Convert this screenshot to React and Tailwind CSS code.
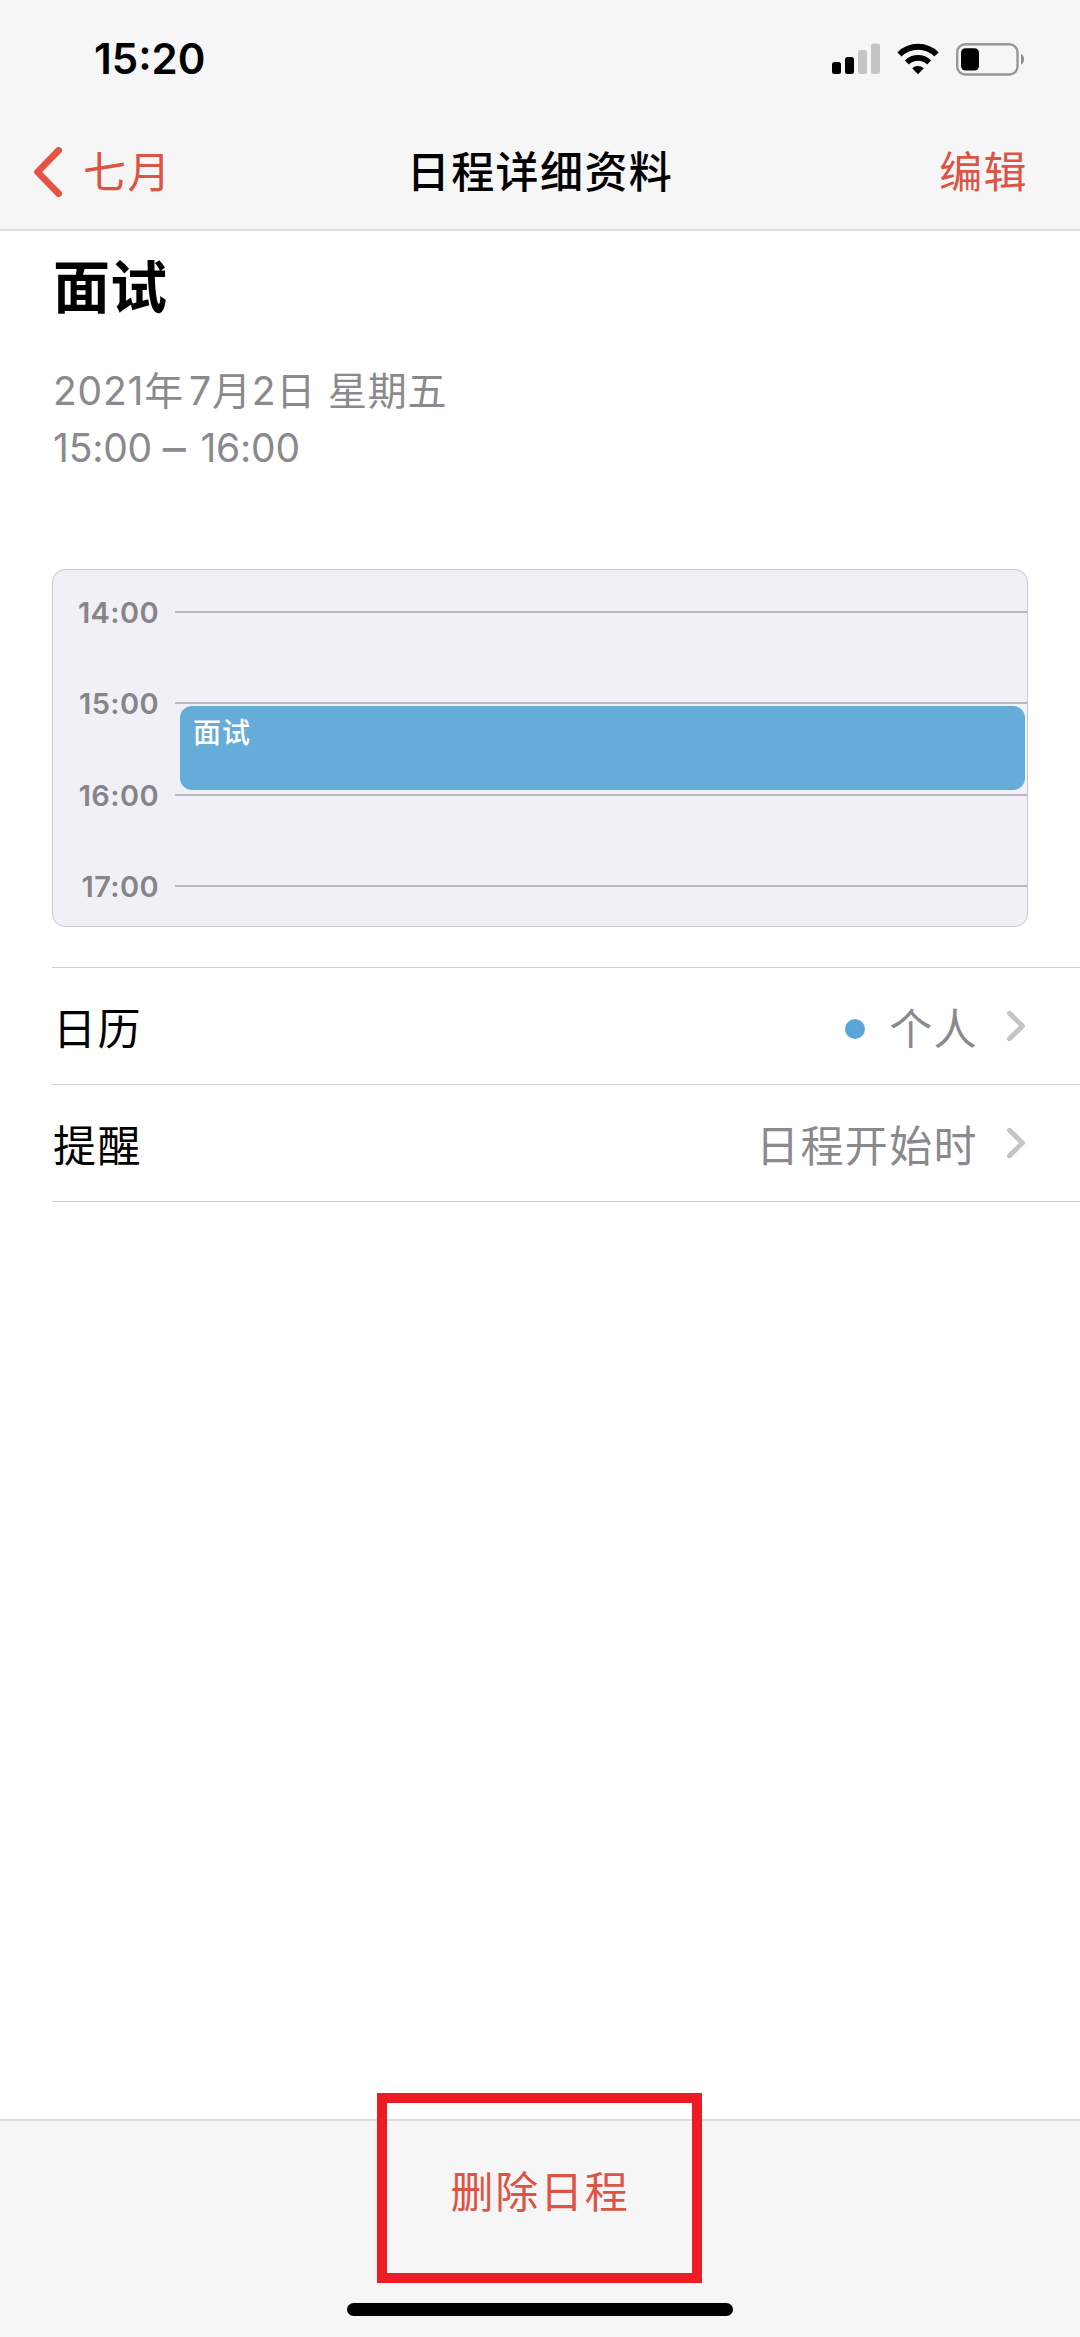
import React from 'react';

const HOURS = ['14:00', '15:00', '16:00', '17:00'];

const ROWS = [
  { label: '日历', value: '个人', dot: true },
  { label: '提醒', value: '日程开始时', dot: false },
];

const SignalIcon = () => (
  <svg width="48" height="32" viewBox="0 0 48 32">
    <rect x="0" y="19" width="9" height="12" rx="2.5" fill="#000" />
    <rect x="13" y="14" width="9" height="17" rx="2.5" fill="#000" />
    <rect x="26" y="7" width="9" height="24" rx="2.5" fill="#c5c5c6" />
    <rect x="39" y="0.5" width="9" height="30.5" rx="2.5" fill="#c5c5c6" />
  </svg>
);

const WifiIcon = () => (
  <svg width="42" height="32" viewBox="0 0 42 32" fill="none" stroke="#000">
    <path d="M2.5 11.5 A26.2 26.2 0 0 1 39.5 11.5" strokeWidth="6" />
    <path d="M9.9 19.4 A15.8 15.8 0 0 1 32.1 19.4" strokeWidth="5.6" />
    <path d="M21 31.2 L15.2 25.3 A8.4 8.4 0 0 1 26.8 25.3 Z" fill="#000" stroke="none" />
  </svg>
);

const BatteryIcon = () => (
  <svg width="69" height="33" viewBox="0 0 69 33">
    <rect x="1.2" y="1.2" width="60.3" height="30.3" rx="8" fill="none" stroke="#98989a" strokeWidth="2.4" />
    <rect x="5" y="5.2" width="18" height="22.3" rx="4.5" fill="#000" />
    <path d="M65 10.8 C69 12.5 69 20 65 21.8 Z" fill="#8e8e90" />
  </svg>
);

const Disclosure = () => (
  <svg width="20" height="32" viewBox="0 0 20 32" fill="none" stroke="#c4c4c7" strokeWidth="5" strokeLinecap="round" strokeLinejoin="round">
    <path d="M3.5 3.3 L16.5 16 L3.5 28.7" />
  </svg>
);

const Header = () => (
  <header className="h-[231px] bg-[#f6f6f6] border-b-2 border-[#dcdcdd]">
    <div className="h-[118px] pl-[94px] pr-[55px] flex items-center justify-between">
      <span className="text-[42px] leading-none font-semibold">15:20</span>
      <div className="flex items-center">
        <SignalIcon />
        <span className="w-[17px]" />
        <WifiIcon />
        <span className="w-[17px]" />
        <BatteryIcon />
      </div>
    </div>
    <nav className="h-[108px] px-[34px] grid grid-cols-3 items-center text-[43px] leading-none tracking-[1.4px]">
      <button className="flex items-center gap-[21px] text-[#dc5445]">
        <svg width="28" height="50" viewBox="0 0 28 50" fill="none" stroke="#e65444" strokeWidth="6.8" strokeLinecap="round" strokeLinejoin="round">
          <path d="M24.6 3.4 L3.6 25 L24.6 46.6" />
        </svg>
        七月
      </button>
      <h1 className="font-medium text-center whitespace-nowrap">日程详细资料</h1>
      <button className="pr-[18px] text-right text-[#dc5445]">编辑</button>
    </nav>
  </header>
);

const Timeline = () => (
  <div className="relative h-[358px] ml-[52px] mr-[52px] mt-[93px] rounded-[13px] border border-[#c9c8cd] bg-[#f1f0f6] overflow-hidden">
    <div className="pt-[19px]">
      {HOURS.map((h) => (
        <div key={h} className="h-[91.3px] flex items-start">
          <span className="w-[106px] pt-[9px] text-right text-[29px] leading-none font-semibold tracking-[0.4px] text-[#86858a]">{h}</span>
          <span className="flex-1 ml-[16px] mt-[22px] h-[2px] bg-[#b9b8be]" />
        </div>
      ))}
    </div>
    {/* event block over the hour grid */}
    <div className="absolute left-[127px] right-[2px] top-[136px] h-[84px] rounded-[12px] bg-[#66acd9] ring-2 ring-[#eef3fb] pl-[13px] pt-[13px] text-[28px] leading-none font-medium tracking-[1px] text-white">
      面试
    </div>
  </div>
);

export default function App() {
  return (
    <div className="relative w-[1080px] h-[2337px] bg-white text-black overflow-hidden flex flex-col font-[Inter,'Noto_Sans_CJK_SC',sans-serif]">
      <Header />

      <main className="flex-1">
        <h2 className="pl-[53px] pt-[27px] text-[57px] leading-[60px] font-bold">面试</h2>
        <div className="pl-[53px] pt-[44px] text-[39px] leading-[57px] text-[#8a8a8e]">
          <p className="h-[57px] tracking-[0.8px]">2021年<span className="ml-[5px]">7</span>月2日 星期五</p>
          <p className="h-[57px] tracking-[-0.2px]">
            15:00 <span className="relative top-[2px] mr-[4px] text-[46px] leading-none">–</span> 16:00
          </p>
        </div>

        <Timeline />

        <div className="ml-[52px] mt-[40px] border-t border-[#d0d0d2]">
          {ROWS.map((row) => (
            <div key={row.label} className="h-[117px] pl-[1px] pr-[54px] flex items-center border-b border-[#d0d0d2] text-[43px] leading-none tracking-[1.4px]">
              <span className="pt-[6px]">{row.label}</span>
              <span className="flex-1" />
              {row.dot && <span className="w-5 h-5 mr-[24px] mt-[6px] rounded-full bg-[#5ba6d6]" />}
              <span className="mr-[28px] pt-[6px] text-[#8a8a8e]">{row.value}</span>
              <Disclosure />
            </div>
          ))}
        </div>
      </main>

      <footer className="h-[218px] bg-[#f6f6f6] border-t-2 border-[#dcdcdd] flex flex-col items-center">
        <button className="mt-[50px] text-[43px] leading-none tracking-[1.8px] text-[#dc5445]">删除日程</button>
        <div className="mt-auto mb-[21px] w-[386px] h-[13px] rounded-full bg-black" />
      </footer>

      {/* highlight frame around the delete action */}
      <div className="absolute left-[377px] top-[2093px] w-[325px] h-[190px] border-[10px] border-[#ed1c24]" />
    </div>
  );
}
